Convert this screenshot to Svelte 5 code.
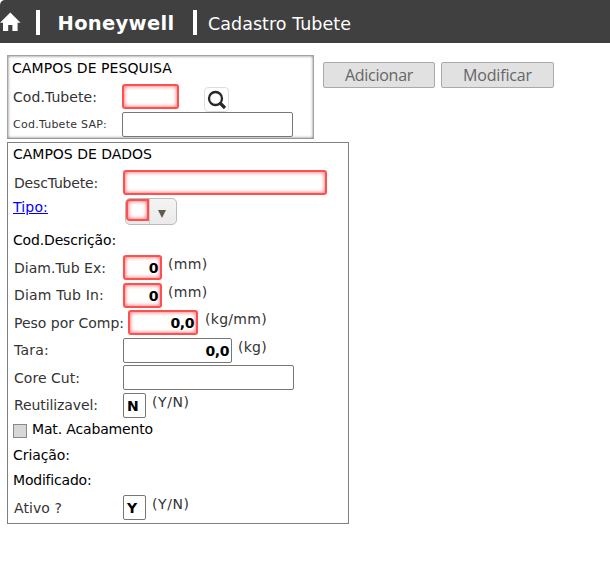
<script>
  function fit(node, width) {
    const natural = node.getBoundingClientRect().width;
    const spacing = (width - natural) / node.textContent.length;
    node.style.letterSpacing = `${spacing.toFixed(3)}px`;
  }

  const measures = [
    { label: 'Diam.Tub Ex:', lw: 92, value: '0', width: 39, unit: '(mm)', uw: 39.5, required: true, gap: 3 },
    { label: 'Diam Tub In:', lw: 90, value: '0', width: 39, unit: '(mm)', uw: 39.5, required: true, raised: true, gap: 2 },
    { label: 'Peso por Comp:', lw: 110, value: '0,0', width: 70, unit: '(kg/mm)', uw: 62, required: true, wide: true, gap: 3 },
    { label: 'Tara:', lw: 35, value: '0,0', width: 109, unit: '(kg)', uw: 29, raised: true, gap: 2 },
    { label: 'Core Cut:', lw: 66, value: '', width: 171, gap: 3 },
    { label: 'Reutilizavel:', lw: 84, value: 'N', width: 23, unit: '(Y/N)', uw: 37.5, left: true, raised: true, gap: 0 }
  ];
  const active = { label: 'Ativo ?', lw: 48, value: 'Y', width: 23, unit: '(Y/N)', uw: 37.5, left: true, gap: 0 };
</script>

{#snippet field(f)}
  <div class="row" style:margin-bottom="{f.gap}px">
    <div class="label" class:wide={f.wide} class:raised={f.raised}><span use:fit={f.lw}>{f.label}</span></div>
    <div class="input" class:required={f.required} class:left={f.left} style:width="{f.width}px">{f.value}</div>
    {#if f.unit}<div class="unit"><span use:fit={f.uw}>{f.unit}</span></div>{/if}
  </div>
{/snippet}

<div class="page">
  <header>
    <svg class="home" width="21" height="20" viewBox="0 0 21 20"><path d="M10.300 0.500 0 10.800h3V19h5.200v-6h4.200v6h5.200v-8.200h3z" fill="#fff" /></svg>
    <i class="bar"></i>
    <strong><span use:fit={117}>Honeywell</span></strong>
    <i class="bar second"></i>
    <h1><span use:fit={143}>Cadastro Tubete</span></h1>
  </header>

  <div class="top">
    <section class="search">
      <div class="title"><span use:fit={160}>CAMPOS DE PESQUISA</span></div>
      <div class="row code">
        <div class="label"><span use:fit={84}>Cod.Tubete:</span></div>
        <div class="input required" style:width="57px"></div>
        <button class="find" aria-label="Pesquisar">
          <svg width="25" height="24" viewBox="0 0 25 24" fill="none" stroke="#282828"><circle cx="10.500" cy="10.500" r="6.500" stroke-width="2.300" /><path d="m15 15 5 5" stroke-width="3.200" /></svg>
        </button>
      </div>
      <div class="row">
        <div class="label small"><span use:fit={94}>Cod.Tubete SAP:</span></div>
        <div class="input" style:width="171px"></div>
      </div>
    </section>
    <div class="actions">
      <button><span use:fit={68}>Adicionar</span></button>
      <button><span use:fit={69}>Modificar</span></button>
    </div>
  </div>

  <section class="data">
    <div class="title"><span use:fit={139}>CAMPOS DE DADOS</span></div>
    <div class="row">
      <div class="label"><span use:fit={84}>DescTubete:</span></div>
      <div class="input required" style:width="204px"></div>
    </div>
    <div class="row type">
      <div class="label"><a href="#tipo"><span use:fit={35}>Tipo:</span></a></div>
      <div class="combo">
        <div class="input required"></div>
        <div class="arrow"><svg width="8" height="8" viewBox="0 0 8 8"><path d="M0 0h8L4 8z" fill="#62594f" /></svg></div>
      </div>
    </div>
    <div class="plain description"><span use:fit={103}>Cod.Descrição:</span></div>
    {#each measures as f}
      {@render field(f)}
    {/each}
    <div class="check"><i></i><span use:fit={121}>Mat. Acabamento</span></div>
    <div class="plain created"><span use:fit={57}>Criação:</span></div>
    <div class="plain modified"><span use:fit={78.5}>Modificado:</span></div>
    {@render field(active)}
  </section>
</div>

<style>
  :global(body) { margin: 0; background: #fff; }
  .page {
    width: 610px;
    height: 577px;
    overflow: hidden;
    background: #fff;
    font: 14px/18px "DejaVu Sans", Verdana, sans-serif;
    color: #000;
    white-space: nowrap;
  }
  .page * { box-sizing: border-box; }
  header {
    height: 43px;
    display: flex;
    align-items: center;
    background: #404040;
    border-top-left-radius: 5px;
    color: #fff;
  }
  .home { flex: none; margin-top: 1px; }
  .bar { width: 4px; height: 25px; margin: 2px 0 0 14.500px; background: #fff; flex: none; }
  strong { width: 117px; margin: 4px 0 0 18px; font-size: 19.500px; line-height: 24px; }
  .bar.second { margin-left: 18px; }
  h1 { margin: 5px 0 0 11.500px; font-size: 17.500px; line-height: 22px; font-weight: 400; }
  .top { display: flex; padding: 12px 0 0 7px; }
  .search {
    width: 307px;
    height: 84px;
    border: 1px solid #a4a4a4;
    border-bottom-color: #999;
    box-shadow: inset 0 0 3px #777;
    padding: 0 4px;
  }
  .search .title { height: 28px; padding-top: 3px; }
  .data {
    width: 342px;
    height: 382px;
    margin: 3px 0 0 7px;
    border: 1px solid #808080;
    padding: 0 5px;
  }
  .data .title { height: 27px; padding-top: 2px; }
  .row { display: flex; align-items: center; height: 25px; }
  .row.code { margin-bottom: 3px; }
  .label { width: 110px; padding-left: 1px; color: #333; flex: none; }
  .label.raised { padding-bottom: 1px; }
  .label.wide { width: 115px; }
  .label.small { font-size: 11px; }
  .input {
    height: 25px;
    border: 1px solid #777;
    border-radius: 2px;
    background: #fff;
    padding: 1px 2px 0 0;
    font-weight: 700;
    line-height: 23px;
    font-size: 14px;
    letter-spacing: -0.400px;
    text-align: right;
    flex: none;
  }
  .input.required { border: 2px solid #ff5050; border-radius: 3px; box-shadow: inset 0 0 4px #ff5050; padding-top: 0; }
  .input.left { text-align: left; padding-left: 3px; }
  .unit { padding: 0 0 7px 6px; color: #333; }
  .wide ~ .unit { padding-left: 7px; }
  button { font: inherit; padding: 0; }
  .find {
    width: 25px;
    height: 25px;
    margin: 6px 0 0 25px;
    border: 1px solid #ddd;
    border-radius: 4px;
    background: #fff;
    display: flex;
  }
  .find svg { flex: none; }
  .actions { display: flex; gap: 6px; padding: 7px 0 0 9px; }
  .actions button {
    width: 112px;
    height: 26px;
    border: 1px solid #aaa;
    border-radius: 2px;
    background: #e1e1e1;
    color: #666;
    font: 16px/24px "Open Sans", "Noto Sans", sans-serif;
  }
  .actions button:last-child { width: 113px; }
  .row.type { height: 27px; margin-top: 3px; }
  .type .label { padding: 0 0 9px; width: 112px; }
  a { color: #00f; text-decoration: underline; }
  .combo {
    display: flex;
    width: 52px;
    height: 27px;
    border: 1px solid #bbb;
    border-radius: 5px;
    background: linear-gradient(#f4f4f4, #eaeaea);
  }
  .combo .input { width: 23px; height: 22px; border-radius: 4px 0 0 4px; margin-left: -0.500px; }
  .arrow { flex: 1; border-left: 1px solid #ccc; display: flex; align-items: center; justify-content: center; padding: 4px 2px 0 0; }
  .plain { height: 25px; line-height: 25px; }
  .plain.description { height: 30px; line-height: 30px; }
  .plain.created, .plain.modified { padding-top: 1px; }
  .plain.modified { margin-bottom: 3px; }
  .check { height: 24px; display: flex; padding-top: 2px; }
  .check i { width: 14px; height: 14px; margin: 4px 5px 0 0; border: 1px solid #888; background: #d7d7d7; }
</style>
